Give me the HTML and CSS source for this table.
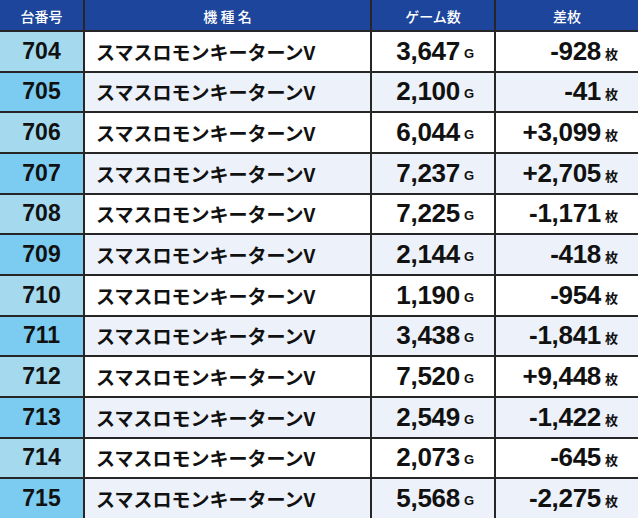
FILE: index.html
```html
<!DOCTYPE html>
<html lang="ja">
<head>
<meta charset="utf-8">
<link rel="stylesheet" href="styles.css">
</head>
<body>
<div class="table">
  <div class="hd">台番号</div><div class="hd">機 種 名</div><div class="hd">ゲーム数</div><div class="hd">差枚</div>

  <div class="no odd">704</div><div class="name odd">スマスロモンキーターンV</div><div class="num odd">3,647<span class="u">G</span></div><div class="num odd">-928<span class="u">枚</span></div>
  <div class="no even">705</div><div class="name even">スマスロモンキーターンV</div><div class="num even">2,100<span class="u">G</span></div><div class="num even">-41<span class="u">枚</span></div>
  <div class="no odd">706</div><div class="name odd">スマスロモンキーターンV</div><div class="num odd">6,044<span class="u">G</span></div><div class="num odd">+3,099<span class="u">枚</span></div>
  <div class="no even">707</div><div class="name even">スマスロモンキーターンV</div><div class="num even">7,237<span class="u">G</span></div><div class="num even">+2,705<span class="u">枚</span></div>
  <div class="no odd">708</div><div class="name odd">スマスロモンキーターンV</div><div class="num odd">7,225<span class="u">G</span></div><div class="num odd">-1,171<span class="u">枚</span></div>
  <div class="no even">709</div><div class="name even">スマスロモンキーターンV</div><div class="num even">2,144<span class="u">G</span></div><div class="num even">-418<span class="u">枚</span></div>
  <div class="no odd">710</div><div class="name odd">スマスロモンキーターンV</div><div class="num odd">1,190<span class="u">G</span></div><div class="num odd">-954<span class="u">枚</span></div>
  <div class="no even">711</div><div class="name even">スマスロモンキーターンV</div><div class="num even">3,438<span class="u">G</span></div><div class="num even">-1,841<span class="u">枚</span></div>
  <div class="no odd">712</div><div class="name odd">スマスロモンキーターンV</div><div class="num odd">7,520<span class="u">G</span></div><div class="num odd">+9,448<span class="u">枚</span></div>
  <div class="no even">713</div><div class="name even">スマスロモンキーターンV</div><div class="num even">2,549<span class="u">G</span></div><div class="num even">-1,422<span class="u">枚</span></div>
  <div class="no odd">714</div><div class="name odd">スマスロモンキーターンV</div><div class="num odd">2,073<span class="u">G</span></div><div class="num odd">-645<span class="u">枚</span></div>
  <div class="no even">715</div><div class="name even">スマスロモンキーターンV</div><div class="num even">5,568<span class="u">G</span></div><div class="num even">-2,275<span class="u">枚</span></div>
</div>
</body>
</html>
```
FILE: styles.css
```css
html, body {
  margin: 0;
  padding: 0;
  background: #ffffff;
}
.table {
  width: 636px;
  height: 518px;
  padding-right: 2px;
  background: #262626;
  display: grid;
  grid-template-columns: 83px 285px 122px 142px;
  grid-template-rows: 30px repeat(12, 1fr);
  column-gap: 2px;
  row-gap: 2px;
}
.hd {
  background: #1c459b;
  color: #ffffff;
  font-family: "Noto Sans CJK JP", "Noto Sans", sans-serif;
  font-size: 14px;
  font-weight: 500;
  display: flex;
  align-items: center;
  justify-content: center;
  padding-top: 2px;
  box-sizing: border-box;
}
.no {
  font-family: "Liberation Sans", Arial, sans-serif;
  font-weight: bold;
  font-size: 23px;
  color: #111;
  display: flex;
  align-items: center;
  justify-content: center;
}
.no.odd { background: #a5d9ee; }
.no.even { background: #7ccbf0; }
.name {
  font-family: "Noto Sans CJK JP", sans-serif;
  font-weight: bold;
  font-size: 19px;
  color: #111;
  display: flex;
  align-items: center;
  padding-left: 11px;
}
.odd { background: #ffffff; }
.even { background: #edf2fa; }
.num {
  font-family: "Liberation Sans", Arial, sans-serif;
  font-weight: bold;
  font-size: 26px;
  color: #111;
  display: flex;
  align-items: center;
  justify-content: flex-end;
  padding-right: 20px;
  letter-spacing: -0.3px;
}
.u {
  font-size: 14px;
  margin-left: 4px;
  letter-spacing: 0;
  padding-top: 4px;
}
.num .u:last-child { font-family: "Liberation Sans", "Noto Sans CJK JP", sans-serif; font-size: 13px; }
```
